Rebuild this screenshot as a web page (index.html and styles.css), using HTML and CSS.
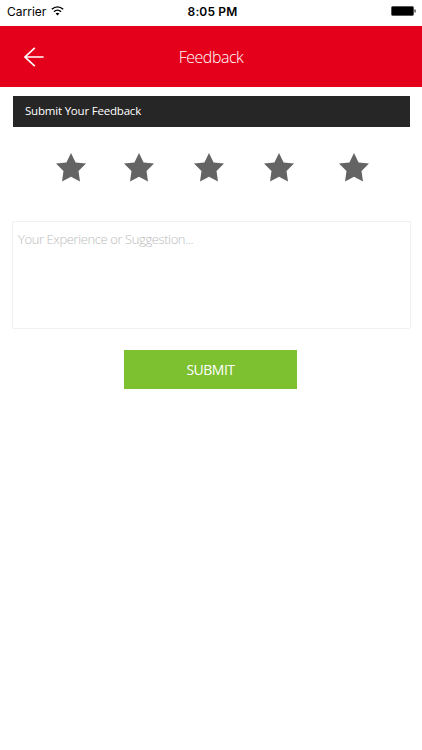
FILE: index.html
```html
<!DOCTYPE html>
<html lang="en">
<head>
  <meta charset="UTF-8">
  <meta name="viewport" content="width=device-width, initial-scale=1">
  <title>Feedback</title>
  <link rel="stylesheet" href="styles.css">
</head>
<body>
  <div class="status-bar">
    <div class="carrier">
      <span>Carrier</span>
      <svg class="wifi" viewBox="0 0 13 10" width="13" height="10">
        <path d="M.8 3.3C4.2.1 8.8.1 12.2 3.3M3 5.7c2-1.9 5-1.9 7 0" fill="none" stroke="#000" stroke-width="1.5"/>
        <path d="M4.6 7.5c1.1-1 2.7-1 3.8 0L6.5 9.6z"/>
      </svg>
    </div>
    <span class="time">8:05 PM</span>
    <svg class="battery" viewBox="0 0 26 10" width="26" height="10">
      <rect x="1.5" y=".5" width="22" height="9" rx="1.2" stroke="#555"/>
      <path d="M24.5 3.5h1v3h-1z"/>
    </svg>
  </div>

  <header class="header">
    <a class="back" href="#" aria-label="Back">
      <svg viewBox="0 0 20 20" width="20" height="20">
        <path d="M10.8.8L1 10l9.8 9.2M1 10h18.6" fill="none" stroke="#fff" stroke-width="1.6"/>
      </svg>
    </a>
    <h1>Feedback</h1>
  </header>

  <form class="feedback">
    <h2>Submit Your Feedback</h2>
    <div class="stars">
      <svg class="star" viewBox="0 0 30 29"><path d="M15 0l4.6 9.5L30 10.5l-7.5 7.6L24 28.5l-9-4.8-9 4.8 1.5-10.4L0 10.5l10.4-1z"/></svg>
      <svg class="star" viewBox="0 0 30 29"><path d="M15 0l4.6 9.5L30 10.5l-7.5 7.6L24 28.5l-9-4.8-9 4.8 1.5-10.4L0 10.5l10.4-1z"/></svg>
      <svg class="star" viewBox="0 0 30 29"><path d="M15 0l4.6 9.5L30 10.5l-7.5 7.6L24 28.5l-9-4.8-9 4.8 1.5-10.4L0 10.5l10.4-1z"/></svg>
      <svg class="star" viewBox="0 0 30 29"><path d="M15 0l4.6 9.5L30 10.5l-7.5 7.6L24 28.5l-9-4.8-9 4.8 1.5-10.4L0 10.5l10.4-1z"/></svg>
      <svg class="star" viewBox="0 0 30 29"><path d="M15 0l4.6 9.5L30 10.5l-7.5 7.6L24 28.5l-9-4.8-9 4.8 1.5-10.4L0 10.5l10.4-1z"/></svg>
    </div>
    <textarea name="message" placeholder="Your Experience or Suggestion..."></textarea>
    <button type="submit">SUBMIT</button>
  </form>
</body>
</html>
```
FILE: styles.css
```css
* {
  box-sizing: border-box;
}

body {
  margin: 0;
  background-color: #fff;
  font-family: "Open Sans", sans-serif;
}

.status-bar {
  display: grid;
  grid-template-columns: 1fr auto 1fr;
  align-items: center;
  height: 26px;
  padding: 0 6px 4px 7px;
  font-family: Inter, sans-serif;
  font-size: 12px;
  color: #000;
}

.carrier {
  display: flex;
  align-items: center;
  gap: 5px;
}

.time {
  padding-left: 2px;
  font-weight: 600;
  font-size: 12px;
  letter-spacing: 0.15px;
}

.battery {
  justify-self: end;
}

.header {
  display: grid;
  grid-template-columns: 48px 1fr 48px;
  align-items: center;
  height: 61px;
  background-color: #e4001b;
  color: #fff;
}

.back {
  display: flex;
  padding-left: 24px;
}

.header h1 {
  margin: 0;
  font-size: 16px;
  font-weight: 300;
  letter-spacing: -0.5px;
  text-align: center;
}

.feedback {
  padding: 9px 12px 0 13px;
}

.feedback h2 {
  height: 31px;
  margin: 0;
  padding-left: 12px;
  background-color: #262626;
  color: #fff;
  font-size: 11.5px;
  font-weight: 400;
  letter-spacing: -0.2px;
  line-height: 29px;
}

.stars {
  display: grid;
  grid-template-columns: 68.3px 69.7px 70px 75px 30px;
  padding: 26px 0 0 42.7px;
}

.star {
  width: 30px;
  height: 29px;
  fill: #646464;
}

textarea {
  display: block;
  width: 399px;
  height: 108px;
  margin: 39px 0 0 -1px;
  padding: 8px 5px;
  border: 1px solid #f1f1f1;
  border-radius: 2px;
  font-family: inherit;
  font-size: 13px;
  font-weight: 300;
  letter-spacing: -0.4px;
  resize: none;
}

textarea::placeholder {
  color: #bbb;
}

button {
  display: block;
  width: 173px;
  height: 39px;
  margin: 21px 0 0 111px;
  padding: 0;
  border: none;
  background-color: #7dc030;
  color: #fff;
  font-family: inherit;
  font-size: 14px;
  letter-spacing: -0.5px;
  cursor: pointer;
}
```
